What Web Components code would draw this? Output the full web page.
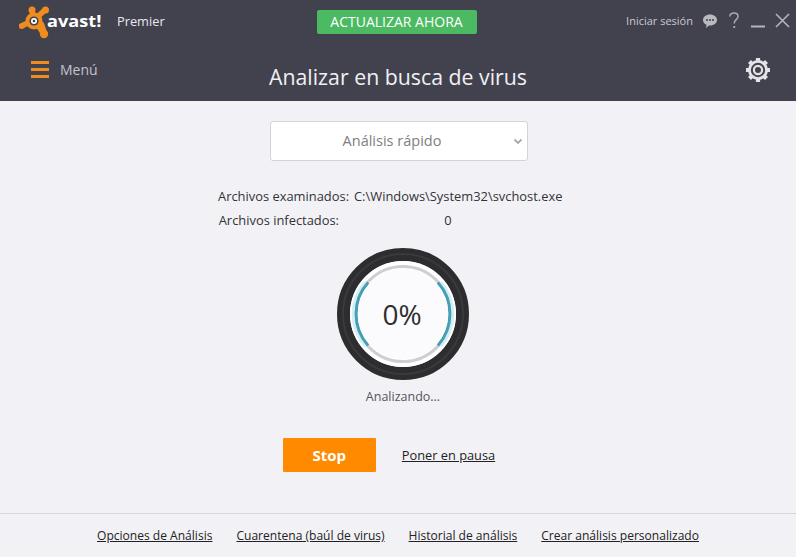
<!DOCTYPE html>
<html><head><meta charset="utf-8">
<style>
html,body{margin:0;padding:0;height:100%}
body{width:796px;height:557px;overflow:hidden;background:#f2f2f6;font-family:"Open Sans",sans-serif;display:flex;flex-direction:column}
</style></head><body>
<av-header></av-header>
<av-main></av-main>
<av-footer></av-footer>
<script>
function def(name,html){
  customElements.define(name,class extends HTMLElement{
    constructor(){super();this.attachShadow({mode:'open'}).innerHTML=html;}
  });
}
def('av-logo',`<style>
:host{display:flex;align-items:center;width:84px;height:34px}
svg{flex:none}
b{font:700 16.5px/1 "Open Sans",sans-serif;color:#fff;margin-left:-6px;transform:translateY(-1px) scaleX(1.1);transform-origin:left}
</style>
<svg width="34" height="34" viewBox="0 0 34 34">
<g fill="none" stroke="#f08c1e" stroke-linecap="round" stroke-linejoin="round">
<path d="M13 5 L15 15 M26 5 L15 15 M2.500 21 L15 15 M25 29 L15 15" stroke-width="5.500"/>
<path d="M22 20 L25 29" stroke-width="7"/>
</g>
<g fill="#f08c1e"><circle cx="15" cy="16" r="8.500"/><circle cx="13" cy="5" r="3.500"/><circle cx="26.500" cy="5" r="3.500"/><circle cx="3" cy="21" r="2.800"/><circle cx="25" cy="29" r="4.200"/></g>
<circle cx="15" cy="16" r="4.600" fill="#42424e"/><circle cx="15" cy="16" r="3" fill="#fff"/><circle cx="15" cy="16" r="1.300" fill="#42424e"/>
</svg><b>avast!</b>`);
def('av-top-icons',`<style>
:host{display:flex;align-items:center;height:20px}
span{font-size:11px;color:#c9c9d0;margin-right:9px;white-space:nowrap}
svg{display:block;flex:none}
</style>
<span>Iniciar sesión</span>
<svg width="16" height="16" viewBox="0 0 16 16" style="margin-right:10px"><path d="M8 1.500c4 0 7 2.400 7 5.500s-3 5.500-7 5.500l-1 0-3 2.500 .5-3.200C2.300 10.800 1 9 1 7c0-3.100 3-5.500 7-5.500z" fill="#b9b9c0"/><circle cx="5" cy="7" r="1" fill="#42424e"/><circle cx="8" cy="7" r="1" fill="#42424e"/><circle cx="11" cy="7" r="1" fill="#42424e"/></svg>
<svg width="12" height="17" viewBox="0 0 12 17" style="margin-right:11px"><path d="M1.800 4.500C2 2.300 3.800 1 6 1c2.400 0 4 1.500 4 3.400 0 3-3.700 3.400-3.700 6.600v.6" fill="none" stroke="#a9a9b1" stroke-width="1.500"/><rect x="5.400" y="14" width="1.800" height="2" fill="#a9a9b1"/></svg>
<svg width="14" height="14" viewBox="0 0 14 14" style="margin-right:10px"><rect y="11.500" width="14" height="2" fill="#b4b4bb"/></svg>
<svg width="15" height="15" viewBox="0 0 15 15"><path d="M1 1l13 13M14 1L1 14" stroke="#b4b4bb" stroke-width="1.600" fill="none"/></svg>`);
def('av-gear',`<style>:host{display:block;width:26px;height:26px}svg{display:block}</style>
<svg width="26" height="26" viewBox="0 0 26 26">
<g stroke="#e3e3e8" stroke-width="4.200">
<path d="M13 1v24M1 13h24M4.500 4.500l17 17M21.500 4.500l-17 17"/></g>
<circle cx="13" cy="13" r="10" fill="#e3e3e8"/>
<circle cx="13" cy="13" r="7.200" fill="#42424e"/>
<circle cx="13" cy="13" r="5.200" fill="#e3e3e8"/>
<circle cx="13" cy="13" r="3" fill="#42424e"/>
</svg>`);
def('av-header',`<style>
:host{display:block;flex:none;height:101px;background:#42424e;color:#fff;box-sizing:border-box}
.r1{display:grid;grid-template-columns:1fr auto 1fr;align-items:center;height:44px;padding:0 6px 0 19px}
.l{display:flex;align-items:center}
.l span{font-size:12.800px;color:#e8e8ec;margin-left:14px;margin-top:-2px}
.upd{background:#4cb963;color:#fff;font-size:14px;line-height:24px;height:24px;width:160px;text-align:center;border-radius:2px;margin-right:16px}
.end{justify-self:end;margin-top:-3px}
.r2{display:grid;grid-template-columns:1fr auto 1fr;align-items:center;height:48px;padding:0 25px 0 31px}
.menu{display:flex;align-items:center;font-size:14px;color:#c3c3cc;margin-top:2px}
.bars{width:18px;height:17px;margin-right:11px;display:flex;flex-direction:column;justify-content:space-between}
.bars i{display:block;height:3px;background:#f08c1e}
h1{margin:17px 6px 0 0;font-weight:400;font-size:21.300px;color:#f0f0f4;white-space:nowrap}
av-gear{justify-self:end;margin-top:3px}
</style>
<div class="r1"><div class="l"><av-logo></av-logo><span>Premier</span></div><div class="upd">ACTUALIZAR AHORA</div><av-top-icons class="end"></av-top-icons></div>
<div class="r2"><div class="menu"><div class="bars"><i></i><i></i><i></i></div>Menú</div><h1>Analizar en busca de virus</h1><av-gear></av-gear></div>`);
def('av-select',`<style>
:host{display:flex;position:relative;box-sizing:border-box;width:258px;height:40px;background:#fff;border:1px solid #d3d3d8;border-radius:3px;align-items:center;justify-content:center;font-size:14.500px;color:#808084;padding:0 14px 2px 0}
svg{position:absolute;right:4px;top:16px}
</style><slot></slot><svg width="10" height="7" viewBox="0 0 10 7"><path d="M1.500 1.500L5 5l3.500-3.500" fill="none" stroke="#a8a8ac" stroke-width="1.800"/></svg>`);
def('av-stats',`<style>
:host{display:grid;grid-template-columns:136px 210px;font-size:12.900px;color:#333338;white-space:nowrap}
div{height:24px;line-height:24px}
.k{text-align:right;padding-right:6px}
.k2{text-align:right;padding-right:15px}
.c{text-align:center;padding-right:22px}
</style>
<div class="k">Archivos examinados:</div><div>C:\\Windows\\System32\\svchost.exe</div>
<div class="k2">Archivos infectados:</div><div class="c">0</div>`);
def('av-progress',`<style>
:host{display:flex;flex-direction:column;align-items:center}
.d{position:relative;width:140px;height:140px}
svg{display:block}
.t{position:absolute;inset:0;display:flex;align-items:center;justify-content:center;font-size:28px;color:#2e2e30;padding-right:2px}
.l{font-size:12.500px;color:#55555c;margin-top:3px;line-height:20px}
</style>
<div class="d">
<svg width="140" height="140" viewBox="0 0 140 140">
<circle cx="70" cy="70" r="59.500" fill="none" stroke="#2d2d2f" stroke-width="13"/>
<circle cx="70" cy="70" r="60" fill="none" stroke="#3a3a3c" stroke-width="2"/>
<circle cx="70" cy="70" r="53" fill="#fff"/>
<circle cx="70" cy="70" r="47.500" fill="none" stroke="#cfcfd1" stroke-width="3"/>
<path d="M35.100 38.600A47 47 0 0 0 35.100 101.400" fill="none" stroke="#d5edf3" stroke-width="5" transform="translate(-2 0)"/>
<path d="M104.900 38.600A47 47 0 0 1 104.900 101.400" fill="none" stroke="#d5edf3" stroke-width="5" transform="translate(2 0)"/>
<path d="M35.100 38.600A47 47 0 0 0 35.100 101.400" fill="none" stroke="#45a0b4" stroke-width="3"/>
<path d="M104.900 38.600A47 47 0 0 1 104.900 101.400" fill="none" stroke="#45a0b4" stroke-width="3"/>
<circle cx="70" cy="70" r="45" fill="#fbfbfd"/>
</svg>
<div class="t">0%</div></div>
<div class="l"><slot></slot></div>`);
def('av-actions',`<style>
:host{display:flex;align-items:center;gap:26px}
.s{width:93px;height:34px;background:#ff8a00;color:#fff;font-weight:700;font-size:15px;line-height:34px;text-align:center;border-radius:1px}
a{font-size:12.800px;color:#222;text-decoration:underline}
</style><div class="s">Stop</div><a>Poner en pausa</a>`);
def('av-main',`<style>
:host{flex:1;display:flex;flex-direction:column;align-items:center;padding-top:20px;box-sizing:border-box}
av-select{margin-left:2px}
av-stats{margin-top:23px;margin-right:14px}
av-progress{margin-top:12px;margin-left:10px}
av-actions{margin-top:31px;margin-right:18px}
</style>
<av-select>Análisis rápido</av-select>
<av-stats></av-stats>
<av-progress>Analizando...</av-progress>
<av-actions></av-actions>`);
def('av-footer',`<style>
:host{flex:none;height:44px;border-top:1px solid #d5d5da;display:flex;justify-content:center;gap:24px;align-items:center;box-sizing:border-box;font-size:12.050px;color:#222}
a{text-decoration:underline;white-space:nowrap}
</style><a>Opciones de Análisis</a><a>Cuarentena (baúl de virus)</a><a>Historial de análisis</a><a>Crear análisis personalizado</a>`);
</script>
</body></html>
